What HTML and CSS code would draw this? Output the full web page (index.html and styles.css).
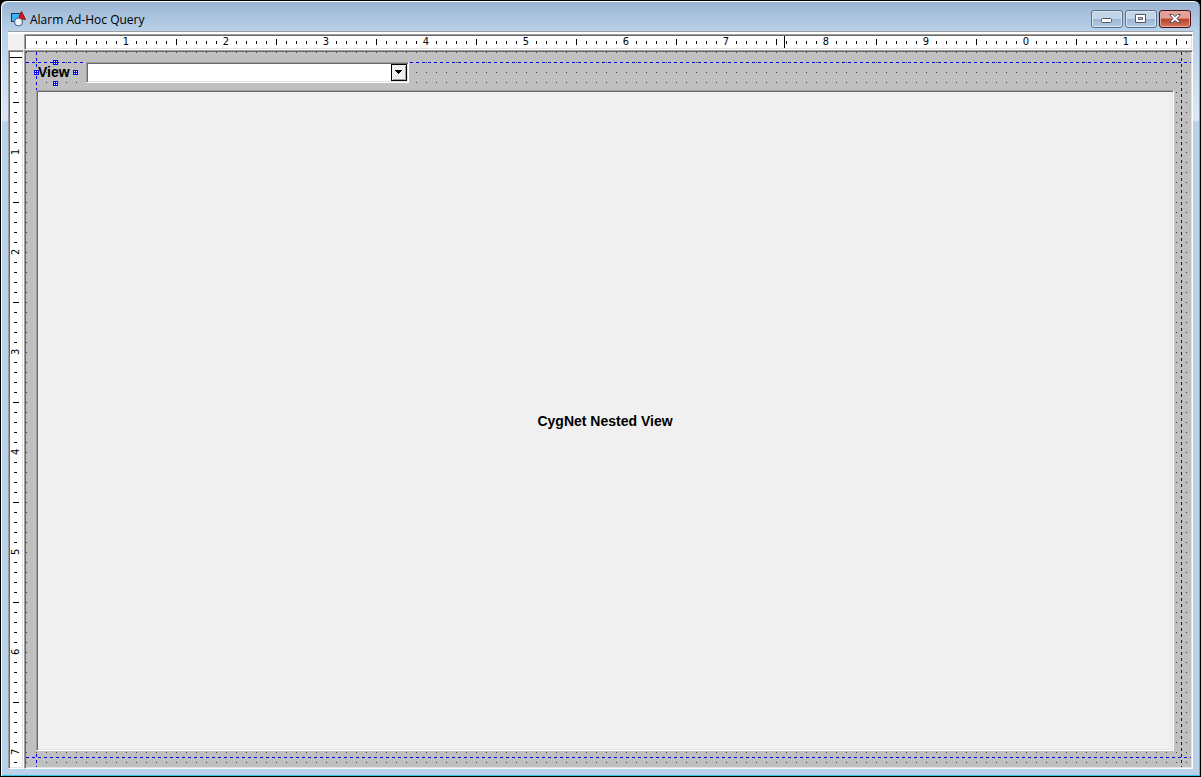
FILE: index.html
```html
<!DOCTYPE html>
<html lang="en">
<head>
    <meta charset="UTF-8">
    <meta name="viewport" content="width=device-width, initial-scale=1.0">
    <title>Alarm Ad-Hoc Query</title>
    <link rel="stylesheet" href="styles.css">
</head>
<body>
    <div class="window">
        <header class="title-bar">
            <svg class="app-icon" width="16" height="16" viewBox="0 0 16 16">
                <rect x="0.5" y="2.5" width="9" height="8" fill="#3fb4f5" stroke="#123a6b"/>
                <path d="M10.5 0.5 L14.5 8.5 L7.5 7.5 Z" fill="#d8141c" stroke="#8e1015"/>
                <circle cx="7.5" cy="11" r="4" fill="#eef3fa" stroke="#4a5a78"/>
            </svg>
            <h1>Alarm Ad-Hoc Query</h1>
            <div class="caption-buttons">
                <button type="button" class="caption" aria-label="Minimize">
                    <svg width="12" height="10" viewBox="0 0 12 10"><rect x="0.5" y="4.5" width="10" height="4" rx="1" fill="#fff" stroke="#535666"/></svg>
                </button>
                <button type="button" class="caption" aria-label="Maximize">
                    <svg width="12" height="10" viewBox="0 0 12 10"><path d="M0.5 0.5 h10 v8 h-10 Z M3.5 3.5 v2 h4 v-2 Z" fill="#fff" fill-rule="evenodd" stroke="#535666"/></svg>
                </button>
                <button type="button" class="caption close" aria-label="Close">
                    <svg width="12" height="10" viewBox="0 0 12 10"><path d="M0.5 0.5 h3 l2.5 2 l2.5 -2 h3 l-3.5 4 l3.5 4 h-3 l-2.5 -2 l-2.5 2 h-3 l3.5 -4 Z" fill="#fff" stroke="#535666"/></svg>
                </button>
            </div>
        </header>
        <main class="editor">
            <div class="corner"></div>
            <div class="ruler ruler-top bevel">
                <span>1</span><span>2</span><span>3</span><span>4</span><span>5</span><span>6</span><span>7</span><span>8</span><span>9</span><span>0</span><span>1</span>
                <i class="cursor"></i>
            </div>
            <div class="ruler ruler-left bevel">
                <span>1</span><span>2</span><span>3</span><span>4</span><span>5</span><span>6</span><span>7</span>
                <i class="cursor"></i>
            </div>
            <div class="canvas bevel">
                <i class="guide guide-x guide-top"></i>
                <i class="guide guide-x guide-bottom"></i>
                <i class="guide guide-y guide-left"></i>
                <i class="guide guide-y guide-right"></i>
                <div class="toolbar">
                    <label for="view">View
                        <i class="handle handle-n"></i>
                        <i class="handle handle-e"></i>
                        <i class="handle handle-s"></i>
                        <i class="handle handle-w"></i>
                    </label>
                    <div class="combo bevel">
                        <select id="view"><option></option></select>
                        <svg class="arrow" width="16" height="17" viewBox="0 0 16 17">
                            <rect x="0.5" y="0.5" width="15" height="16" fill="#f0f0f0" stroke="#000"/>
                            <path d="M14.5 2 V15.5 H2" fill="none" stroke="#a0a0a0"/>
                            <path d="M4 6 h7 v1 h-1 v1 h-1 v1 h-1 v1 h-1 v-1 h-1 v-1 h-1 v-1 h-1 Z" fill="#000" shape-rendering="crispEdges"/>
                        </svg>
                    </div>
                </div>
                <section class="nested-view bevel">CygNet Nested View</section>
            </div>
        </main>
    </div>
</body>
</html>
```
FILE: styles.css
```css
* {
    box-sizing: border-box;
}
body {
    margin: 0;
    background-color: #000;
    font-family: "Liberation Sans", Arial, sans-serif;
}
.window {
    display: flex;
    flex-direction: column;
    height: 100vh;
    padding: 0 7px 7px;
    border: 1px solid #000;
    border-radius: 7px 7px 0 0;
    background: linear-gradient(#99b4d1 0, #b9d1ea 30px, #dce8f5 119px, #b9d1ea 121px);
    box-shadow: inset 1px 1px #fff, inset -1px -1px #34c3e3;
}

/* title bar */
.title-bar {
    display: flex;
    align-items: center;
    height: 30px;
    padding: 6px 2px 0 3px;
}
.title-bar h1 {
    flex: 1;
    margin: 0 0 0 3px;
    font: 12px "Open Sans", sans-serif;
    color: #000;
}
.caption-buttons {
    display: flex;
    gap: 2px;
}
.caption {
    display: flex;
    align-items: center;
    justify-content: center;
    width: 32px;
    height: 18px;
    padding: 0;
    border: 1px solid #5b6f88;
    border-radius: 3px;
    background: linear-gradient(#c3d5e8 50%, #9bb5d2 50%, #b6cce4);
    box-shadow: inset 0 0 0 1px #dbe6f2;
}
.close {
    border-color: #4c1018;
    background: linear-gradient(#e3a197 45%, #b9402b 50%, #d5775f);
    box-shadow: inset 0 0 0 1px #e4a79e;
}

/* sunken edge shared by rulers, canvas and controls */
.bevel {
    padding: 1px;
    border: 1px solid;
    border-color: #a0a0a0 #fff #fff #a0a0a0;
    box-shadow: inset 1px 1px #696969, inset -1px -1px #e3e3e3;
}
.editor {
    flex: 1;
    min-height: 0;
    display: grid;
    grid-template: 16px minmax(0, 1fr) / 16px minmax(0, 1fr);
    padding-top: 2px;
    border-top: 1px solid #a0a0a0;
    background-color: #fff;
}
.corner {
    background-color: #f0f0f0;
}

/* rulers */
.ruler {
    position: relative;
    display: flex;
    overflow: hidden;
    background-color: #fff;
    background-origin: content-box;
    font: 11px/12px "DejaVu Sans Condensed", "DejaVu Sans", sans-serif;
}
.ruler span {
    flex: none;
    display: flex;
    align-items: center;
    justify-content: center;
    background: linear-gradient(#fff, #fff) center / 9px 9px no-repeat;
}
.ruler-top {
    background-image:
        linear-gradient(#fff, #fff),
        linear-gradient(to right, #000 1px, transparent 1px),
        linear-gradient(to right, #000 1px, transparent 1px);
    background-size: 5px 12px, 10px 3px, 100px 6px;
    background-position: 0 0, 0 5px, 50px 3px;
    background-repeat: no-repeat, repeat-x, repeat-x;
}
.ruler-top span {
    width: 100px;
}
.ruler-top span:first-child {
    margin-left: 50px;
}
.ruler-left {
    flex-direction: column;
    background-image:
        linear-gradient(#fff, #fff),
        linear-gradient(#000 1px, transparent 1px),
        linear-gradient(#000 1px, transparent 1px);
    background-size: 12px 5px, 3px 10px, 6px 100px;
    background-position: 0 0, 4px 0, 3px 50px;
    background-repeat: no-repeat, repeat-y, repeat-y;
}
.ruler-left span {
    height: 100px;
    writing-mode: vertical-rl;
    transform: rotate(180deg);
}
.ruler-left span:first-child {
    margin-top: 50px;
}
.cursor {
    position: absolute;
    background-color: #000;
}
.ruler-top .cursor {
    left: 759px;
    top: 1px;
    width: 1px;
    height: 12px;
}
.ruler-left .cursor {
    left: 1px;
    top: 6px;
    width: 12px;
    height: 1px;
}

/* design surface */
.canvas {
    position: relative;
    display: flex;
    flex-direction: column;
    gap: 7px;
    padding: 11px 18px 17px 11px;
    background:
        repeating-linear-gradient(to right, transparent 0 1px, #c0c0c0 1px 10px) 1px 1px,
        repeating-linear-gradient(to bottom, #404040 0 1px, #c0c0c0 1px 10px) 1px 1px;
}
.guide {
    position: absolute;
}
.guide-x {
    left: 1px;
    right: 1px;
    height: 1px;
    background: repeating-linear-gradient(to right, #00f 0 3px, transparent 3px 6px);
}
.guide-y {
    top: 1px;
    bottom: 1px;
    width: 1px;
    background: repeating-linear-gradient(to bottom, #00f 0 3px, transparent 3px 6px);
}
.guide-top {
    top: 11px;
}
.guide-bottom {
    bottom: 10px;
}
.guide-left {
    left: 11px;
}
.guide-right {
    right: 10px;
}
.toolbar {
    position: relative;
    display: flex;
    gap: 10px;
    height: 21px;
}
.toolbar label {
    position: relative;
    width: 40px;
    padding-left: 2px;
    font-size: 14px;
    font-weight: bold;
    line-height: 21px;
}
.handle {
    position: absolute;
    width: 5px;
    height: 5px;
    border: 1px solid #00f;
    background:
        linear-gradient(#00f, #00f) center / 1px 3px no-repeat,
        linear-gradient(#00f, #00f) center / 3px 1px no-repeat,
        #fff;
}
.handle-n {
    left: 17px;
    top: -2px;
}
.handle-s {
    left: 17px;
    bottom: -3px;
}
.handle-w {
    left: -2px;
    top: 8px;
}
.handle-e {
    right: -2px;
    top: 8px;
}
.combo {
    position: relative;
    width: 323px;
    background-color: #fff;
}
.combo select {
    display: block;
    width: 100%;
    height: 100%;
    padding: 0;
    border: 0;
    outline: 0;
    appearance: none;
    background-color: #fff;
}
.arrow {
    position: absolute;
    right: 1px;
    top: 1px;
    pointer-events: none;
}
.nested-view {
    position: relative;
    flex: 1;
    display: flex;
    align-items: center;
    justify-content: center;
    background-color: #f0f0f0;
    color: #000;
    font-size: 14px;
    font-weight: bold;
}
```
